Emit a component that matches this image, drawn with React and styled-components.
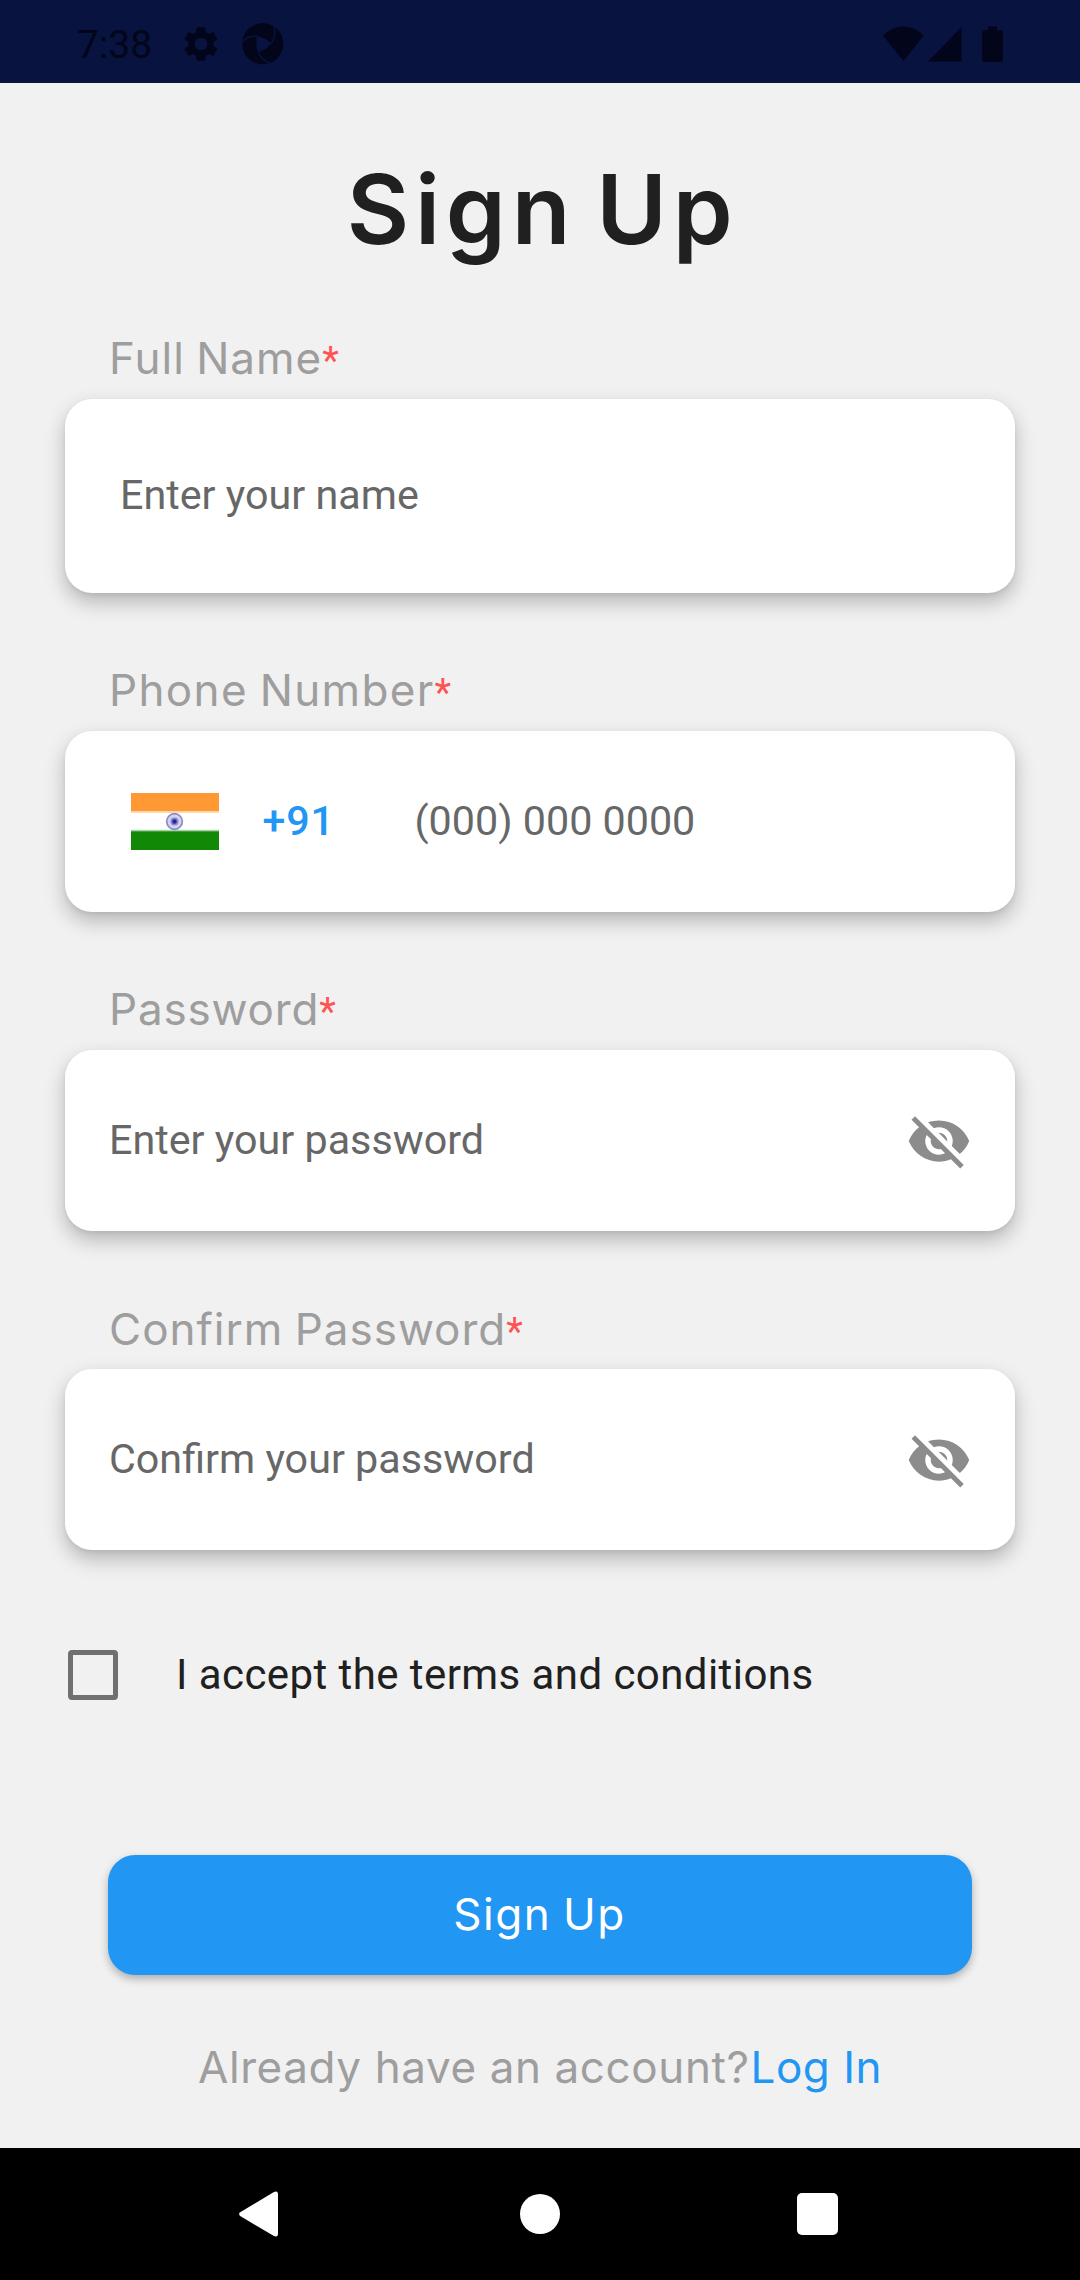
import React, { useState } from 'react';
import styled, { createGlobalStyle } from 'styled-components';
import { MdSettings, MdVisibilityOff, MdVisibility } from 'react-icons/md';

const GlobalStyle = createGlobalStyle`
  *, *::before, *::after { box-sizing: border-box; }
  body { margin: 0; background: #f1f1f1; }
`;

const barColor = '#08133f';
const barInk = '#03051a';
const blue = '#2196f3';
const display = 'Inter, "Liberation Sans", sans-serif';
const body = 'Roboto, "Liberation Sans", sans-serif';

const Screen = styled.div`
  display: flex;
  flex-direction: column;
  width: 1080px;
  height: 2280px;
  background: #f1f1f1;
  font-family: ${body};
  overflow: hidden;
`;

const StatusBar = styled.header`
  display: flex;
  align-items: center;
  flex: none;
  height: 83px;
  padding: 4px 76px 0 77px;
  background: ${barColor};
  color: ${barInk};
`;

const Clock = styled.time`
  margin-right: 28px;
  padding-top: 3px;
  font-size: 39px;
  line-height: 44px;
`;

const SettingsIcon = styled(MdSettings)`
  width: 42px;
  height: 42px;
  margin-right: 20px;
`;

const StatusIcons = styled.div`
  display: flex;
  align-items: center;
  margin-left: auto;
`;

const Content = styled.main`
  display: flex;
  flex-direction: column;
  flex: 1;
  padding: 66px 65px 0;
`;

const Title = styled.h1`
  margin: 0 0 59px;
  padding-left: 5px;
  font: 600 96px/120px ${display};
  letter-spacing: 5.8px;
  word-spacing: -10px;
  text-align: center;
  color: #202020;
`;

const Form = styled.form`
  display: flex;
  flex-direction: column;
  gap: 67.4px;
`;

const Field = styled.div`
  display: flex;
  flex-direction: column;
  gap: 10.7px;
`;

const Label = styled.label`
  display: flex;
  align-items: baseline;
  height: 60px;
  padding-left: 44px;
  font: 400 44px/60px ${display};
  letter-spacing: ${(p) => p.$tracking}px;
  word-spacing: -2px;
  color: #9e9e9e;
`;

const Required = styled.span`
  font: 400 38.5px/60px ${body};
  letter-spacing: 0;
  color: #ff5252;
`;

const Card = styled.div`
  display: flex;
  align-items: center;
  height: ${(p) => p.$height || 181.2}px;
  padding: 0 43px 0 ${(p) => p.$inset || 44}px;
  border-radius: 27px;
  background: #fff;
  box-shadow: 0 9px 20px rgba(0, 0, 0, 0.25), 0 2px 4px rgba(0, 0, 0, 0.06);
`;

const Placeholder = styled.span`
  padding-bottom: ${(p) => (p.$lowered ? 0 : 2)}px;
  font-size: 41.25px;
  line-height: 50px;
  white-space: nowrap;
  color: #676767;
`;

const DialCode = styled.span`
  width: 152px;
  margin-left: 43.5px;
  font-size: 41.25px;
  font-weight: 500;
  line-height: 50px;
  letter-spacing: 0.8px;
  color: ${blue};
`;

const EyeButton = styled.button`
  display: flex;
  margin-left: auto;
  padding: 1px 0 0;
  border: 0;
  background: none;
  color: #8c8c8c;
  font-size: 66px;
`;

const Terms = styled.label`
  display: flex;
  align-items: center;
  height: 50px;
  margin-top: 99.5px;
  padding-left: 3px;
`;

const CheckBox = styled.input`
  appearance: none;
  width: 50px;
  height: 50px;
  margin: 0;
  border: 5.5px solid #707070;
  border-radius: 4px;
`;

const TermsText = styled.span`
  margin-left: 58px;
  padding-top: 1px;
  font-size: 42px;
  line-height: 50px;
  letter-spacing: 0.43px;
  color: #202020;
`;

const SubmitButton = styled.button`
  height: 120px;
  margin: 155px 43px 0;
  padding: 0 1px 1px 0;
  border: 0;
  border-radius: 27px;
  background: ${blue};
  box-shadow: 0 4px 8px rgba(0, 0, 0, 0.28);
  font: 400 44px/54px ${display};
  letter-spacing: 1.5px;
  word-spacing: -2px;
  color: #fff;
`;

const LoginRow = styled.p`
  display: flex;
  justify-content: center;
  margin: 62px 0 0;
  font: 400 44px/60px ${display};
  letter-spacing: 0.6px;
  color: #9e9e9e;
`;

const LoginLink = styled.a`
  padding-left: 1px;
  letter-spacing: 0.5px;
  color: ${blue};
`;

const NavBar = styled.nav`
  display: flex;
  align-items: center;
  flex: none;
  height: 132px;
  padding: 0 242px 0 239px;
  background: #000;
`;

const NavKey = styled.svg`
  display: block;
  margin-left: ${(p) => p.$gap || 0}px;
  fill: #fff;
`;

const Browser = () => (
  <svg width="42" height="42" viewBox="0 0 42 42">
    <circle cx="20.7" cy="20.7" r="20.6" fill={barInk} />
    <path d="M15.3 13.3Q23 14 29 20.7Q24 27 16 29Q13 21 15.3 13.3Z" fill={barColor} />
    <path
      d="M29 20.7Q34.5 13 32 3.5M15.3 13.3Q5 12.5 0 19M16 29Q20 38 29 40.5"
      fill="none"
      stroke={barColor}
      strokeWidth="1.5"
    />
  </svg>
);

const Signals = () => (
  <svg width="121" height="36" viewBox="0 0 121 36" fill={barInk}>
    <path d="M0 9.6Q8.8 .4 20.4 .4Q32 .4 40.8 9.6L20.4 35Z" />
    <path d="M78.5 1V35.4H45Z" />
    <path d="M105 0.5h9v3.8h4q2 0 2 2V34q0 2-2 2h-17q-2 0-2-2V6.300q0-2 2-2h4z" />
  </svg>
);

const Flag = () => (
  <svg width="88" height="57" viewBox="0 0 88 57">
    <path fill="#ff9933" d="M0 0h88v18.500H0z" />
    <path fill="#ffd9b0" d="M0 18.500h88v1.500H0z" />
    <path fill="#fff" d="M0 20h88v17H0z" />
    <path fill="#a9d3a5" d="M0 36.800h88v1.700H0z" />
    <path fill="#128807" d="M0 38.300h88V57H0z" />
    <circle cx="43.500" cy="28.500" r="7.800" fill="#d3d3ee" stroke="#8989cc" strokeWidth="1.700" />
    <circle cx="43.500" cy="28.500" r="4" fill="#8787cb" />
    <circle cx="43.500" cy="28.500" r="2.200" fill="#26269c" />
  </svg>
);

function FieldLabel({ text, tracking }) {
  return (
    <Label $tracking={tracking}>
      {text}
      <Required>*</Required>
    </Label>
  );
}

function PasswordField({ label, tracking, hint }) {
  const [visible, setVisible] = useState(false);
  return (
    <Field>
      <FieldLabel text={label} tracking={tracking} />
      <Card>
        <Placeholder>{hint}</Placeholder>
        <EyeButton type="button" onClick={() => setVisible(!visible)}>
          {visible ? <MdVisibility /> : <MdVisibilityOff />}
        </EyeButton>
      </Card>
    </Field>
  );
}

export default function App() {
  return (
    <Screen>
      <GlobalStyle />
      <StatusBar>
        <Clock>7:38</Clock>
        <SettingsIcon />
        <Browser />
        <StatusIcons>
          <Signals />
        </StatusIcons>
      </StatusBar>
      <Content>
        <Title>Sign Up</Title>
        <Form>
          <Field>
            <FieldLabel text="Full Name" tracking={1} />
            <Card $height={194} $inset={55}>
              <Placeholder>Enter your name</Placeholder>
            </Card>
          </Field>
          <Field>
            <FieldLabel text="Phone Number" tracking={1.35} />
            <Card $inset={66}>
              <Flag />
              <DialCode>+91</DialCode>
              <Placeholder $lowered>(000) 000 0000</Placeholder>
            </Card>
          </Field>
          <PasswordField label="Password" tracking={0.83} hint="Enter your password" />
          <PasswordField label="Confirm Password" tracking={1} hint="Confirm your password" />
        </Form>
        <Terms>
          <CheckBox type="checkbox" />
          <TermsText>I accept the terms and conditions</TermsText>
        </Terms>
        <SubmitButton type="button">Sign Up</SubmitButton>
        <LoginRow>
          Already have an account?
          <LoginLink>Log In</LoginLink>
        </LoginRow>
      </Content>
      <NavBar>
        <NavKey width="39" height="46" viewBox="0 0 39 46">
          <path d="M1.200 21.200L34.500 1.200Q39 -1 39 3.500V42.500Q39 47 34.500 44.800L1.200 25Q-1 23 1.200 21.200Z" />
        </NavKey>
        <NavKey $gap={242} width="40" height="40" viewBox="0 0 40 40">
          <circle cx="20" cy="20" r="20" />
        </NavKey>
        <NavKey $gap={237} width="41" height="42" viewBox="0 0 41 42">
          <rect width="41" height="42" rx="5" />
        </NavKey>
      </NavBar>
    </Screen>
  );
}
